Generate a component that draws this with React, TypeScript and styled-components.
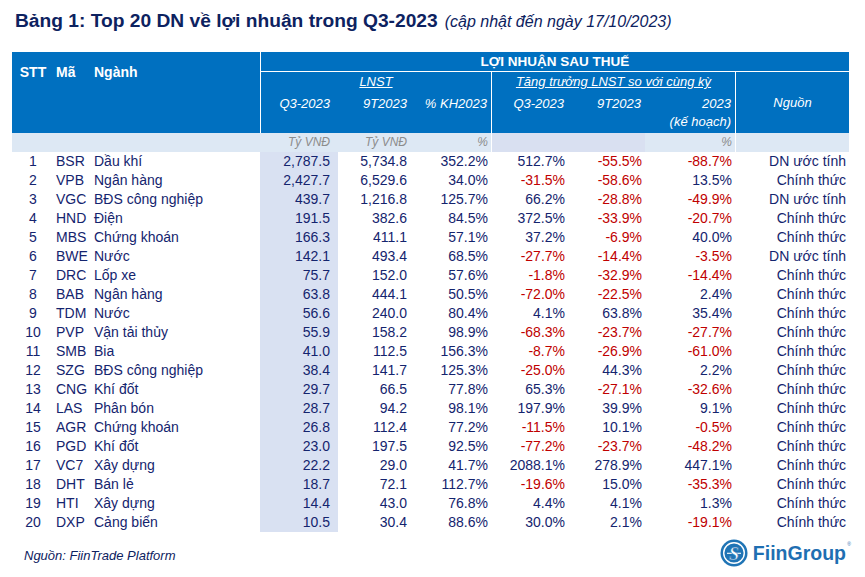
import React from "react";
import styled, { createGlobalStyle } from "styled-components";

const COLS = "42px 38px 168px 78px 74px 79px 77px 77px 90px 114px";
const BLUE = "#0070c0";
const NAVY = "#14246e";
const RED = "#c00000";

type Row = [string, string, string, string, string, string, string, string, string, string];

const rows: Row[] = [
  ["1", "BSR", "Dầu khí", "2,787.5", "5,734.8", "352.2%", "512.7%", "-55.5%", "-88.7%", "DN ước tính"],
  ["2", "VPB", "Ngân hàng", "2,427.7", "6,529.6", "34.0%", "-31.5%", "-58.6%", "13.5%", "Chính thức"],
  ["3", "VGC", "BĐS công nghiệp", "439.7", "1,216.8", "125.7%", "66.2%", "-28.8%", "-49.9%", "DN ước tính"],
  ["4", "HND", "Điện", "191.5", "382.6", "84.5%", "372.5%", "-33.9%", "-20.7%", "Chính thức"],
  ["5", "MBS", "Chứng khoán", "166.3", "411.1", "57.1%", "37.2%", "-6.9%", "40.0%", "Chính thức"],
  ["6", "BWE", "Nước", "142.1", "493.4", "68.5%", "-27.7%", "-14.4%", "-3.5%", "DN ước tính"],
  ["7", "DRC", "Lốp xe", "75.7", "152.0", "57.6%", "-1.8%", "-32.9%", "-14.4%", "Chính thức"],
  ["8", "BAB", "Ngân hàng", "63.8", "444.1", "50.5%", "-72.0%", "-22.5%", "2.4%", "Chính thức"],
  ["9", "TDM", "Nước", "56.6", "240.0", "80.4%", "4.1%", "63.8%", "35.4%", "Chính thức"],
  ["10", "PVP", "Vận tải thủy", "55.9", "158.2", "98.9%", "-68.3%", "-23.7%", "-27.7%", "Chính thức"],
  ["11", "SMB", "Bia", "41.0", "112.5", "156.3%", "-8.7%", "-26.9%", "-61.0%", "Chính thức"],
  ["12", "SZG", "BĐS công nghiệp", "38.4", "141.7", "125.3%", "-25.0%", "44.3%", "2.2%", "Chính thức"],
  ["13", "CNG", "Khí đốt", "29.7", "66.5", "77.8%", "65.3%", "-27.1%", "-32.6%", "Chính thức"],
  ["14", "LAS", "Phân bón", "28.7", "94.2", "98.1%", "197.9%", "39.9%", "9.1%", "Chính thức"],
  ["15", "AGR", "Chứng khoán", "26.8", "112.4", "77.2%", "-11.5%", "10.1%", "-0.5%", "Chính thức"],
  ["16", "PGD", "Khí đốt", "23.0", "197.5", "92.5%", "-77.2%", "-23.7%", "-48.2%", "Chính thức"],
  ["17", "VC7", "Xây dựng", "22.2", "29.0", "41.7%", "2088.1%", "278.9%", "447.1%", "Chính thức"],
  ["18", "DHT", "Bán lẻ", "18.7", "72.1", "112.7%", "-19.6%", "15.0%", "-35.3%", "Chính thức"],
  ["19", "HTI", "Xây dựng", "14.4", "43.0", "76.8%", "4.4%", "4.1%", "1.3%", "Chính thức"],
  ["20", "DXP", "Cảng biển", "10.5", "30.4", "88.6%", "30.0%", "2.1%", "-19.1%", "Chính thức"],
];

// right padding of each numeric column, index 3..9
const pads = [0, 0, 0, 8, 5, 3, 3, 3, 3, 3];

const GlobalStyle = createGlobalStyle`
  body {
    margin: 0;
    background: #ffffff;
    font-family: "Liberation Sans", Arial, sans-serif;
  }
`;

const Page = styled.div`
  width: 865px;
  height: 577px;
  padding-top: 10px;
  box-sizing: border-box;
  overflow: hidden;
`;

const Title = styled.h1`
  margin: 0 0 19px 15px;
  font-size: 19.2px;
  font-weight: bold;
  color: #0d2260;
  line-height: 22px;
  white-space: nowrap;
`;

const Subtitle = styled.span`
  font-size: 16px;
  font-weight: normal;
  font-style: italic;
  margin-left: 7px;
`;

const Table = styled.div`
  margin-left: 12px;
  width: 837px;
`;

const Head = styled.div`
  display: grid;
  grid-template-columns: ${COLS};
  grid-template-rows: 20px 19px 42px;
  background: ${BLUE};
  color: #ffffff;
  font-size: 13px;
`;

const HeadLabel = styled.div<{ $col: number; $center?: boolean }>`
  grid-column: ${(p) => p.$col};
  grid-row: 1 / 4;
  padding-top: 12px;
  padding-left: ${(p) => (p.$center ? 0 : 2)}px;
  text-align: ${(p) => (p.$center ? "center" : "left")};
  font-weight: bold;
  font-size: 14px;
`;

const GroupTitle = styled.div`
  grid-column: 4 / 11;
  grid-row: 1;
  border-left: 1px solid #ffffff;
  border-bottom: 1px solid #ffffff;
  text-align: center;
  font-weight: bold;
  font-size: 13.5px;
  line-height: 20px;
`;

const SubGroup = styled.div<{ $cols: string }>`
  grid-column: ${(p) => p.$cols};
  grid-row: 2;
  border-left: 1px solid #ffffff;
  text-align: center;
  font-style: italic;
  text-decoration: underline;
  line-height: 19px;
`;

const SourceHead = styled.div`
  grid-column: 10;
  grid-row: 2 / 4;
  border-left: 1px solid #ffffff;
  display: flex;
  align-items: center;
  justify-content: center;
  font-style: italic;
  padding-bottom: 1px;
`;

const SubHead = styled.div<{ $col: number; $pad: number; $line?: boolean }>`
  grid-column: ${(p) => p.$col};
  grid-row: 3;
  padding: 4px ${(p) => p.$pad}px 0 0;
  text-align: right;
  font-style: italic;
  line-height: 18px;
  border-left: ${(p) => (p.$line ? "1px solid #ffffff" : "none")};
`;

const Units = styled.div`
  display: grid;
  grid-template-columns: ${COLS};
  height: 19px;
  background: #dde8f4;
`;

const UnitCell = styled.div<{ $pad: number; $tint?: boolean; $line?: boolean }>`
  padding-right: ${(p) => p.$pad}px;
  text-align: right;
  font-style: italic;
  font-size: 12px;
  line-height: 19px;
  color: #8c8c8c;
  background: ${(p) => (p.$tint ? "#d9e0f1" : "transparent")};
  border-left: ${(p) => (p.$line ? "1px solid #ffffff" : "none")};
`;

const BodyRow = styled.div`
  display: grid;
  grid-template-columns: ${COLS};
  height: 19px;
  font-size: 14px;
  line-height: 19px;
`;

const Cell = styled.div<{ $align: "left" | "center" | "right"; $pad?: number; $neg?: boolean; $shade?: boolean }>`
  text-align: ${(p) => p.$align};
  padding-left: ${(p) => (p.$align === "left" ? 2 : 0)}px;
  padding-right: ${(p) => p.$pad || 0}px;
  color: ${(p) => (p.$neg ? RED : NAVY)};
  background: ${(p) => (p.$shade ? "#d9e1f2" : "transparent")};
  white-space: nowrap;
`;

const Footer = styled.div`
  display: flex;
  align-items: center;
  justify-content: space-between;
  margin-top: 7px;
  padding: 0 14px 0 24px;
  height: 28px;
`;

const Source = styled.div`
  font-size: 13px;
  font-style: italic;
  color: #0d2260;
  padding-top: 5px;
`;

const Brand = styled.div`
  display: flex;
  align-items: center;
  gap: 5px;
`;

const BrandName = styled.span`
  font-size: 19.5px;
  font-weight: bold;
  color: #1f6fb2;
  position: relative;
  padding-right: 5px;
`;

const Reg = styled.sup`
  position: absolute;
  right: 0;
  top: -1px;
  font-size: 5px;
  font-weight: normal;
  color: #1f6fb2;
`;

const Logo = () => (
  <svg width="28" height="28" viewBox="0 0 28 28">
    <circle cx="14" cy="14" r="13.5" fill="#1f74b5" />
    <circle cx="14" cy="14" r="10.3" fill="none" stroke="#ffffff" strokeWidth="1.4" />
    <line x1="7" y1="14.3" x2="21" y2="14.3" stroke="#ffffff" strokeWidth="1.1" />
    <text
      x="14"
      y="20.5"
      textAnchor="middle"
      fontFamily="'Liberation Serif', serif"
      fontWeight="bold"
      fontStyle="italic"
      fontSize="18"
      fill="#ffffff"
      stroke="#1f74b5"
      strokeWidth="0.6"
    >
      S
    </text>
  </svg>
);

const isNeg = (v: string) => v.startsWith("-");

const App = () => (
  <Page>
    <GlobalStyle />
    <Title>
      Bảng 1: Top 20 DN về lợi nhuận trong Q3-2023
      <Subtitle>(cập nhật đến ngày 17/10/2023)</Subtitle>
    </Title>
    <Table>
      <Head>
        <HeadLabel $col={1} $center>
          STT
        </HeadLabel>
        <HeadLabel $col={2}>Mã</HeadLabel>
        <HeadLabel $col={3}>Ngành</HeadLabel>
        <GroupTitle>LỢI NHUẬN SAU THUẾ</GroupTitle>
        <SubGroup $cols="4 / 7">LNST</SubGroup>
        <SubGroup $cols="7 / 10">Tăng trưởng LNST so với cùng kỳ</SubGroup>
        <SourceHead>Nguồn</SourceHead>
        <SubHead $col={4} $pad={8} $line>
          Q3-2023
        </SubHead>
        <SubHead $col={5} $pad={5}>
          9T2023
        </SubHead>
        <SubHead $col={6} $pad={4}>
          % KH2023
        </SubHead>
        <SubHead $col={7} $pad={4} $line>
          Q3-2023
        </SubHead>
        <SubHead $col={8} $pad={4}>
          9T2023
        </SubHead>
        <SubHead $col={9} $pad={4}>
          2023
          <br />
          (kế hoạch)
        </SubHead>
      </Head>
      <Units>
        <UnitCell $pad={0} />
        <UnitCell $pad={0} />
        <UnitCell $pad={0} />
        <UnitCell $pad={8}>Tỷ VNĐ</UnitCell>
        <UnitCell $pad={5}>Tỷ VNĐ</UnitCell>
        <UnitCell $pad={3}>%</UnitCell>
        <UnitCell $pad={3} $tint $line />
        <UnitCell $pad={3} $tint />
        <UnitCell $pad={3}>%</UnitCell>
        <UnitCell $pad={3} $line />
      </Units>
      {rows.map((r) => (
        <BodyRow key={r[0]}>
          <Cell $align="center">{r[0]}</Cell>
          <Cell $align="left">{r[1]}</Cell>
          <Cell $align="left">{r[2]}</Cell>
          {r.slice(3).map((v, i) => (
            <Cell key={i} $align="right" $pad={pads[i + 3]} $neg={i >= 3 && i <= 5 && isNeg(v)} $shade={i === 0}>
              {v}
            </Cell>
          ))}
        </BodyRow>
      ))}
    </Table>
    <Footer>
      <Source>Nguồn: FiinTrade Platform</Source>
      <Brand>
        <Logo />
        <BrandName>
          FiinGroup
          <Reg>®</Reg>
        </BrandName>
      </Brand>
    </Footer>
  </Page>
);

export default App;
